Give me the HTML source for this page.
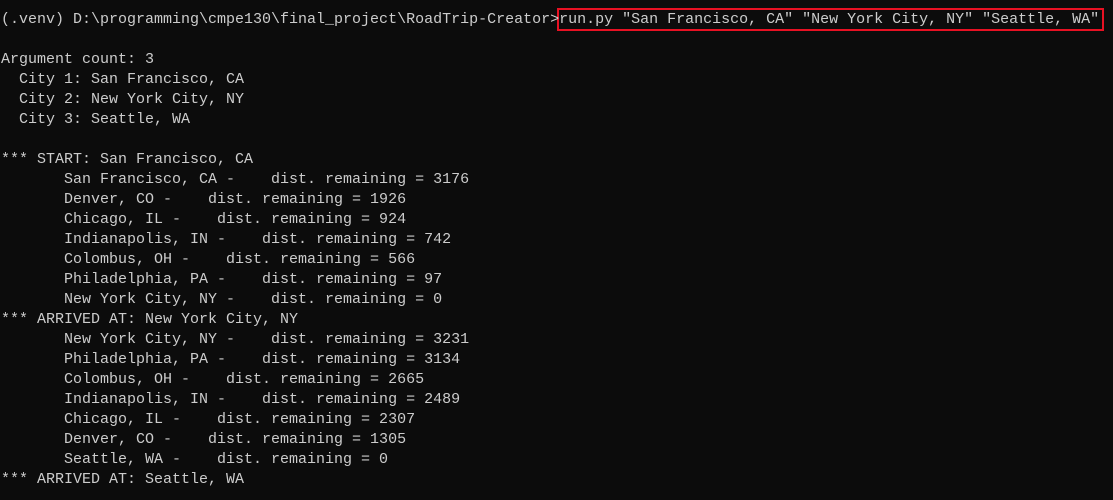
<!DOCTYPE html>
<html><head><style>
html,body{margin:0;padding:0;background:#0c0c0c;width:1113px;height:500px;overflow:hidden}
pre{margin:0;position:absolute;left:1px;top:10px;font-family:"Liberation Mono",monospace;font-size:15px;line-height:20px;color:#cccccc;letter-spacing:0}
.box{position:absolute;left:557px;top:8px;width:543px;height:19px;border:2px solid #e81123}
</style></head><body>
<div class="box"></div>
<pre>(.venv) D:\programming\cmpe130\final_project\RoadTrip-Creator&gt;run.py "San Francisco, CA" "New York City, NY" "Seattle, WA"

Argument count: 3
  City 1: San Francisco, CA
  City 2: New York City, NY
  City 3: Seattle, WA

*** START: San Francisco, CA
       San Francisco, CA -    dist. remaining = 3176
       Denver, CO -    dist. remaining = 1926
       Chicago, IL -    dist. remaining = 924
       Indianapolis, IN -    dist. remaining = 742
       Colombus, OH -    dist. remaining = 566
       Philadelphia, PA -    dist. remaining = 97
       New York City, NY -    dist. remaining = 0
*** ARRIVED AT: New York City, NY
       New York City, NY -    dist. remaining = 3231
       Philadelphia, PA -    dist. remaining = 3134
       Colombus, OH -    dist. remaining = 2665
       Indianapolis, IN -    dist. remaining = 2489
       Chicago, IL -    dist. remaining = 2307
       Denver, CO -    dist. remaining = 1305
       Seattle, WA -    dist. remaining = 0
*** ARRIVED AT: Seattle, WA</pre>
</body></html>
